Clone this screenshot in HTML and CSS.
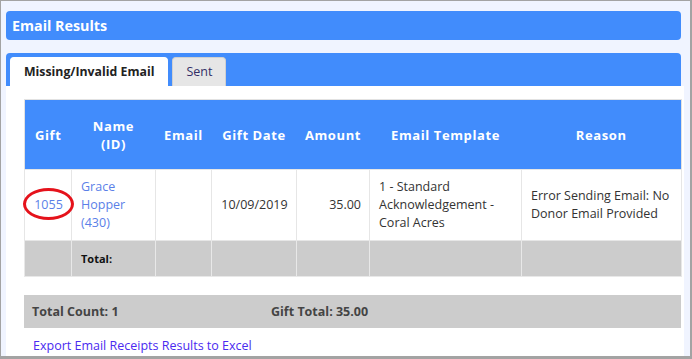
FILE: index.html
```html
<!DOCTYPE html>
<html lang="en">
<head>
  <meta charset="UTF-8">
  <title>Email Results</title>
  <link rel="stylesheet" href="styles.css">
</head>
<body>
  <div class="frame">
    <div class="title-bar">Email Results</div>

    <div class="tab-bar">
      <div class="tab active">Missing/Invalid Email</div>
      <div class="tab">Sent</div>
    </div>

    <div class="panel">
      <table class="results">
        <colgroup>
          <col style="width: 47px">
          <col style="width: 84px">
          <col style="width: 56px">
          <col style="width: 85px">
          <col style="width: 73px">
          <col style="width: 152px">
          <col style="width: 160px">
        </colgroup>
        <thead>
          <tr>
            <th>Gift</th>
            <th>Name<br>(ID)</th>
            <th>Email</th>
            <th>Gift Date</th>
            <th>Amount</th>
            <th>Email Template</th>
            <th>Reason</th>
          </tr>
        </thead>
        <tbody>
          <tr class="data-row">
            <td class="center"><span class="circled"><a href="#">1055</a><span class="ring"></span></span></td>
            <td><a href="#">Grace Hopper (430)</a></td>
            <td></td>
            <td class="center">10/09/2019</td>
            <td class="right">35.00</td>
            <td>1 - Standard Acknowledgement - Coral Acres</td>
            <td>Error Sending Email: No Donor Email Provided</td>
          </tr>
          <tr class="total-row">
            <td></td>
            <td>Total:</td>
            <td></td>
            <td></td>
            <td></td>
            <td></td>
            <td></td>
          </tr>
        </tbody>
      </table>

      <div class="summary">
        <span class="count">Total Count: 1</span>
        <span>Gift Total: 35.00</span>
      </div>

      <a class="export" href="#">Export Email Receipts Results to Excel</a>
    </div>
  </div>
</body>
</html>
```

FILE: styles.css
```css
* {
  box-sizing: border-box;
}
body {
  margin: 0;
  font-family: "Open Sans", Arial, sans-serif;
  font-size: 12.5px;
  color: #333;
}
.frame {
  width: 692px;
  height: 359px;
  padding: 10px 9px 0 5px;
  background-color: #f0f4ff;
  border: 1px solid #a3a3a3;
  border-right-width: 2px;
  border-bottom-width: 3px;
  overflow: hidden;
}
.title-bar {
  height: 29px;
  line-height: 29px;
  padding-left: 6px;
  background-color: #418cfc;
  border-radius: 4px;
  color: #fff;
  font-size: 14.3px;
  font-weight: bold;
}
.tab-bar {
  display: flex;
  gap: 4px;
  height: 33px;
  margin-top: 13px;
  padding: 4px 0 0 4px;
  background-color: #418cfc;
  border-radius: 4px 4px 0 0;
}
.tab {
  height: 29px;
  line-height: 28px;
  padding: 0 13px;
  background-color: #e6e6e6;
  border: 1px solid #d0d0d0;
  border-bottom: none;
  border-radius: 4px 4px 0 0;
  color: #332f66;
  font-size: 12.5px;
}
.tab.active {
  background-color: #fff;
  border-color: #fff;
  color: #222;
  font-size: 12.3px;
  font-weight: bold;
}
.panel {
  height: 270px;
  margin-right: -3px;
  padding: 13px 3px 0 18px;
  background-color: #fff;
}
.results {
  width: 657px;
  table-layout: fixed;
  border-collapse: collapse;
  border: 1px solid #e2e2e2;
}
.results th {
  height: 70px;
  padding: 0 4px;
  background-color: #418cfc;
  color: #fff;
  font-size: 13px;
  font-weight: bold;
  letter-spacing: 0.6px;
  line-height: 18px;
}
.results td {
  padding: 0 8px 0 9px;
  border: 1px solid #e6e6e6;
  line-height: 18px;
  vertical-align: middle;
}
.data-row td {
  height: 71px;
}
.results a {
  color: #5b7fe8;
  text-decoration: none;
}
.center {
  text-align: center;
}
.right {
  text-align: right;
}
.circled {
  position: relative;
  display: inline-block;
}
.ring {
  position: absolute;
  left: -11px;
  top: -8px;
  width: 51px;
  height: 32px;
  border: 3px solid #e5121b;
  border-radius: 50%;
}
.total-row td {
  height: 36px;
  background-color: #cccccc;
  border-color: #e8e8e8;
  color: #111;
  font-size: 11px;
  font-weight: bold;
}
.summary {
  display: flex;
  align-items: center;
  width: 657px;
  height: 33px;
  margin-top: 18px;
  padding-left: 8px;
  background-color: #cccccc;
  color: #444;
  font-size: 12.5px;
  font-weight: bold;
}
.count {
  width: 239px;
}
.export {
  display: block;
  margin-top: 9px;
  padding-left: 9px;
  color: #4a2bf0;
  text-decoration: none;
}
```
